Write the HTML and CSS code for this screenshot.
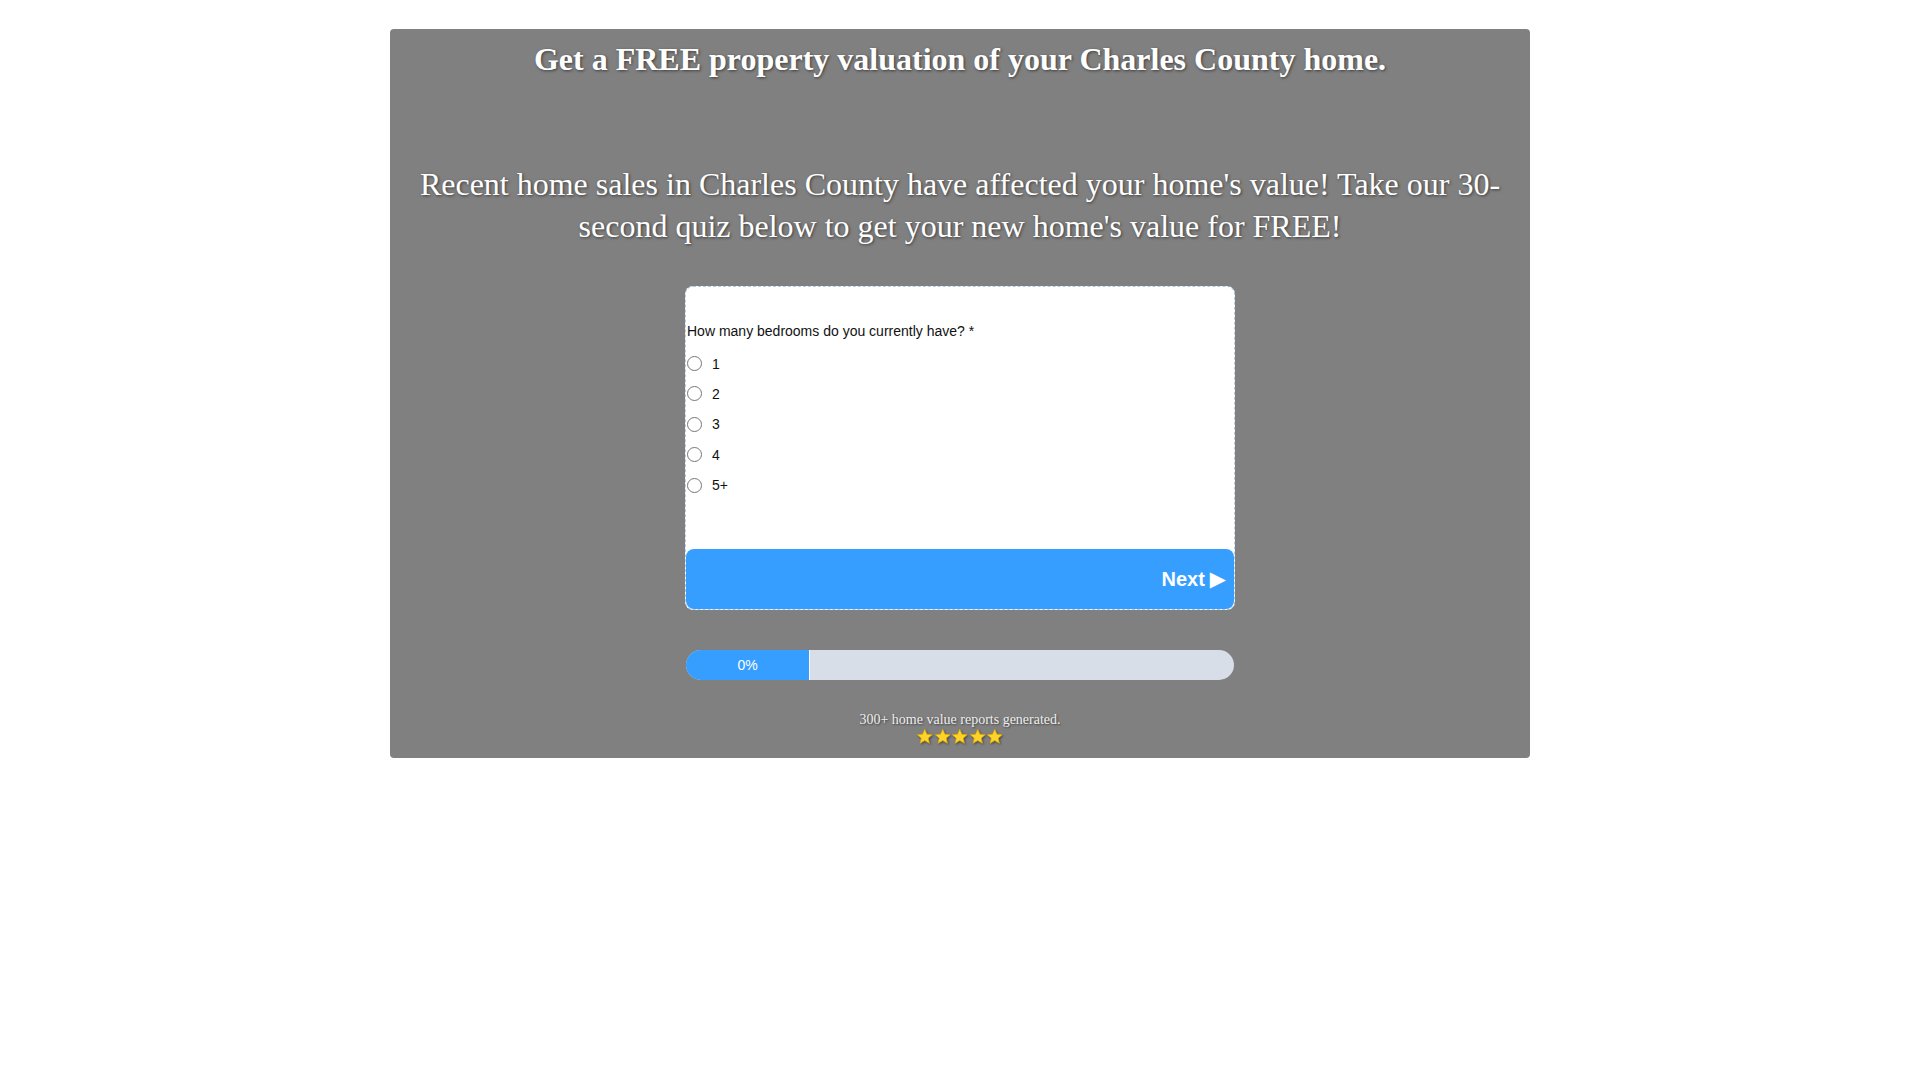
FILE: index.html
```html
<!DOCTYPE html>
<html lang="en">
<head>
<meta charset="utf-8">
<title>Charles County Home Valuation</title>
<link rel="stylesheet" href="styles.css">
</head>
<body>
<div class="panel">
  <h1 class="title">Get a FREE property valuation of your Charles County home.</h1>
  <p class="lead">Recent home sales in Charles County have affected your home's value! Take our 30-second quiz below to get your new home's value for FREE!</p>

  <form class="quiz">
    <div class="question">
      <div class="q-label">How many bedrooms do you currently have? *</div>
      <label class="opt"><input type="radio" name="beds" value="1"><span>1</span></label>
      <label class="opt"><input type="radio" name="beds" value="2"><span>2</span></label>
      <label class="opt"><input type="radio" name="beds" value="3"><span>3</span></label>
      <label class="opt"><input type="radio" name="beds" value="4"><span>4</span></label>
      <label class="opt"><input type="radio" name="beds" value="5+"><span>5+</span></label>
    </div>
    <button type="button" class="next">Next <span class="arrow">&#9654;</span></button>
  </form>

  <div class="progress">
    <div class="progress-fill">0%</div>
  </div>

  <div class="footer">
    <div class="reports">300+ home value reports generated.</div>
    <div class="stars">
      <svg class="star" viewBox="0 0 24 24"><path d="M12 1.8l3 6.6 7.2.7-5.4 4.8 1.6 7.1L12 17.3 5.6 21l1.6-7.1L1.8 9.1 9 8.4z"/></svg>
      <svg class="star" viewBox="0 0 24 24"><path d="M12 1.8l3 6.6 7.2.7-5.4 4.8 1.6 7.1L12 17.3 5.6 21l1.6-7.1L1.8 9.1 9 8.4z"/></svg>
      <svg class="star" viewBox="0 0 24 24"><path d="M12 1.8l3 6.6 7.2.7-5.4 4.8 1.6 7.1L12 17.3 5.6 21l1.6-7.1L1.8 9.1 9 8.4z"/></svg>
      <svg class="star" viewBox="0 0 24 24"><path d="M12 1.8l3 6.6 7.2.7-5.4 4.8 1.6 7.1L12 17.3 5.6 21l1.6-7.1L1.8 9.1 9 8.4z"/></svg>
      <svg class="star" viewBox="0 0 24 24"><path d="M12 1.8l3 6.6 7.2.7-5.4 4.8 1.6 7.1L12 17.3 5.6 21l1.6-7.1L1.8 9.1 9 8.4z"/></svg>
    </div>
  </div>
</div>
</body>
</html>
```

FILE: styles.css
```css
* { box-sizing: border-box; }

html, body {
  margin: 0;
  padding: 0;
  background: #ffffff;
}

body {
  font-family: "Liberation Serif", "Times New Roman", serif;
}

.panel {
  width: 1140px;
  margin: 29px auto 0;
  background: #808080;
  border-radius: 4px;
  padding: 11px 15px 12px;
  color: #ffffff;
  display: flex;
  flex-direction: column;
  align-items: center;
}

.title {
  margin: 0;
  font-size: 32px;
  line-height: 38.4px;
  font-weight: bold;
  text-align: center;
  text-shadow: 1px 1px 3px rgba(0, 0, 0, 0.55);
}

.lead {
  margin: 85px 0 0;
  font-size: 32px;
  line-height: 42px;
  font-weight: normal;
  text-align: center;
  text-shadow: 1px 1px 3px rgba(0, 0, 0, 0.55);
}

.quiz {
  margin-top: 39px;
  width: 550px;
  background: #ffffff;
  border: 1px dashed #b3cde6;
  border-radius: 8px;
  display: flex;
  flex-direction: column;
  font-family: "Liberation Sans", Arial, sans-serif;
  color: #111111;
}

.question {
  padding: 34px 0 49px 1px;
  display: flex;
  flex-direction: column;
}

.q-label {
  font-size: 14px;
  line-height: 20px;
  margin-bottom: 7px;
}

.opt {
  display: flex;
  align-items: center;
  height: 30.4px;
  font-size: 14px;
  line-height: 20px;
  cursor: pointer;
}

.opt input {
  width: 15px;
  height: 15px;
  margin: 0 10px 0 0;
  flex: none;
}

.next {
  height: 60px;
  border: 0;
  border-radius: 8px;
  background: #369eff;
  color: #ffffff;
  font-family: "Liberation Sans", Arial, sans-serif;
  font-weight: bold;
  font-size: 20px;
  text-align: right;
  padding: 0 8px 0 0;
  display: flex;
  align-items: center;
  justify-content: flex-end;
  gap: 5px;
  cursor: pointer;
}

.arrow {
  font-family: "DejaVu Sans", sans-serif;
  font-size: 21px;
  font-weight: normal;
  line-height: 1;
}

.progress {
  margin-top: 40px;
  width: 548px;
  height: 30px;
  border-radius: 15px;
  background: #d8dee7;
  overflow: hidden;
  display: flex;
}

.progress-fill {
  width: 124px;
  height: 100%;
  background: #369eff;
  border-right: 1px solid #ffffff;
  color: #ffffff;
  font-family: "Liberation Sans", Arial, sans-serif;
  font-size: 14px;
  display: flex;
  align-items: center;
  justify-content: center;
}

.footer {
  margin-top: 30px;
  display: flex;
  flex-direction: column;
  align-items: center;
}

.reports {
  font-size: 14px;
  line-height: 20px;
  color: #eeeeee;
  text-shadow: 1px 1px 2px rgba(0, 0, 0, 0.5);
}

.stars {
  display: flex;
  height: 19px;
  margin-top: -3px;
  align-items: center;
}

.star {
  width: 17.5px;
  height: 17.5px;
  fill: #ffd42a;
  stroke: #e0a800;
  stroke-width: 1;
  stroke-linejoin: round;
  filter: drop-shadow(1px 1px 1px rgba(0, 0, 0, 0.45));
}
```
